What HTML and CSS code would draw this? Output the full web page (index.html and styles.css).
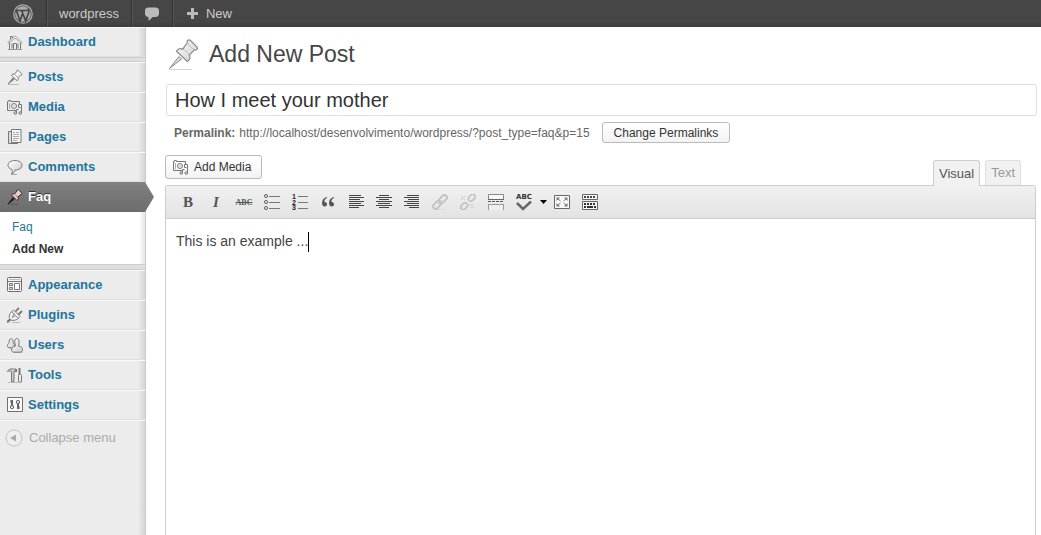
FILE: index.html
```html
<!DOCTYPE html>
<html lang="en">
<head>
<meta charset="utf-8">
<meta name="viewport" content="width=device-width, initial-scale=1">
<title>Add New Post</title>
<link rel="stylesheet" href="styles.css">
</head>
<body>
<svg class="sprite" aria-hidden="true">
  <defs>
    <linearGradient id="metal" x1="0" y1="0" x2="1" y2="1"><stop offset="0" stop-color="#fff"/><stop offset="1" stop-color="#ccc"/></linearGradient>
    <symbol id="i-home" viewBox="0 0 16 16"><path d="M3 8h10v7H3z" fill="#eee"/><path d="M.8 8.500 8 1.800l7.200 6.700L14 9.300 8 4 2 9.300z" fill="#fff" stroke="#888" stroke-width=".8"/><path d="M3.500 5.500V2.500h2V4M2.500 9v6M13.500 9v6M5 9.500v5M11 9.500v5M6.500 15V9.500h3V15" fill="none" stroke="#777"/><path d="M1 15.500h14" stroke="#999"/></symbol>
    <symbol id="i-pin" viewBox="0 0 32 32"><path d="M2 30.500h23" stroke="#aaa" stroke-opacity=".5"/><path d="M2.500 29.500 12 17.500l2.500 2.500z" fill="#ddd" stroke="#888"/><path d="M20.500 3.500c-1-2 .8-3.500 2.700-2.200l6.600 6.600c1.500 2-.3 3.800-2.300 2.800l-5.200 5.300c1.400 2.600 0 5.300-2 6.500L9.500 12.200c1.500-2.200 4-3 6.200-2z" fill="url(#metal)" stroke="#888" stroke-width="1.200"/><path d="M15.700 10.200c2 .5 5.500 3.300 6.600 5.800M20.500 3.500c1.500 3 4 6 7 7.200" fill="none" stroke="#bbb"/></symbol>
    <symbol id="i-smallpin" viewBox="0 0 16 16"><path d="M1 15.500h11" stroke="#bbb"/><path d="m1 15 5-6 1.200 1.200z" fill="#777" stroke="#777" stroke-width=".8"/><path d="M9.800 2.500c-.4-1.200.6-1.700 1.400-1.100l3.400 3.400c.7.900-.1 1.800-1.200 1.400l-2.400 2.500c.7 1.400 0 2.400-.9 3L4.400 6.200c.7-1.100 1.800-1.500 3-1z" fill="#f7f7f7" stroke="#777"/><path d="m7.600 5.300 3.100 3.200" stroke="#999"/></symbol>
    <symbol id="i-pinred" viewBox="0 0 32 32"><path d="M1 30.500h22" stroke="#333" stroke-width="2" stroke-opacity=".4"/><path d="M2 30 12 17l3 3z" fill="#222" stroke="#222" stroke-width="2"/><path d="M20 4c-1-2 1-4 3-2.500l6.500 6.500c1.500 2-.5 4-2.500 3l-5 5c1.500 3 0 6-2 7L9 12c1.500-2.500 4-3 6-2z" fill="#ecd0cb" stroke="#3c2623" stroke-width="2"/><path d="m16 11 6 6" stroke="#8e6962" stroke-width="2"/></symbol>
    <symbol id="i-media" viewBox="0 0 16 16"><path d="M10 11.500H.5v-9h1v-1h2v1h9V5" fill="none" stroke="#777"/><path d="M2.500 4v6" stroke="#aaa"/><circle cx="7" cy="7" r="2.500" fill="#f4f4f4" stroke="#777"/><circle cx="7" cy="7" r="1" fill="#ccc"/><path d="M9.500 14V10.500h2M11.500 5.500h3V14M11.500 5.500v3h2" fill="none" stroke="#777"/><circle cx="8.300" cy="14" r="1.300" fill="#ddd" stroke="#777"/><circle cx="13.300" cy="14" r="1.300" fill="#ddd" stroke="#777"/></symbol>
    <symbol id="i-pages" viewBox="0 0 16 16"><path d="M4 2.500H1.500v12h9V14" fill="#ddd" stroke="#777"/><path d="M4.500.500h9.500v13H4.500z" fill="#f7f7f7" stroke="#777"/><path d="M6 3.500h2M9 3.500h3M6 5.500h6M6 7.500h6M6 9.500h6M6 11.500h4" stroke="#aaa"/></symbol>
    <symbol id="i-comments" viewBox="0 0 16 16"><path d="M4 15.500h6" stroke="#aaa"/><path d="M8 1.500c4 0 7 2 7 4.700s-3 4.800-7 4.800c0 2-1.500 3.300-3.500 3.800.9-1.200 1-2.500.5-4.200C2.500 9.700 1 8.200 1 6.200c0-2.700 3-4.700 7-4.700z" fill="url(#metal)" stroke="#777"/></symbol>
    <symbol id="i-appearance" viewBox="0 0 16 16"><rect x=".5" y=".5" width="14" height="14" rx="1" fill="#f5f5f5" stroke="#6d6d6d"/><path d="M2 2.500h11" stroke="#bbb"/><path d="M1 4.500h13" stroke="#777"/><path d="M2.500 6.500h3v2h-3zM2.500 10.500h3v2h-3z" fill="#ddd" stroke="#777"/><path d="M7.500 6.500h5v6h-5z" fill="#fff" stroke="#777"/></symbol>
    <symbol id="i-plugins" viewBox="0 0 16 16"><path d="M5 15.500h8" stroke="#bbb"/><path d="m0 15.300 3.500-3" fill="none" stroke="#777" stroke-width="2.200"/><path d="M8.500 4.500 12 .8M11.500 7.500 15 4" fill="none" stroke="#777" stroke-width="1.800"/><path d="m6.500 3 6.500 6.500c-2 3-6.500 5.200-9.500 3S3 5.500 6.500 3z" fill="#f5f5f5" stroke="#777"/><path d="m5 5 6 6M7.500 6.500 5 10.500l4-2" fill="none" stroke="#888"/></symbol>
    <symbol id="i-users" viewBox="0 0 16 16"><path d="M4 14.500h11.500V16H6z" fill="#bbb"/><g fill="url(#metal)" stroke="#777"><path d="M2.300 5.800c-1.200-5.500 4.600-5.500 3.700 0C8 7 8 10.500 6 10.800H2C-.2 10.500 0 7 2.300 5.800z"/><path d="M8 7c-1.800-7.500 5.300-7.500 4 0 0 .8-.2 1.500-.5 2 5.500.7 5.500 6 1 6.200H7.800C3 15 3.500 10 8.500 9z"/></g></symbol>
    <symbol id="i-tools" viewBox="0 0 16 16"><path d="M.5 4.500c1-2.500 3-3 6-2.500h2.300v2.500H7v10H4.500v-10c-1.500-.7-2.800-.5-4 0z" fill="#ccc" stroke="#777"/><path d="M9 2v3M12.500 1v7" fill="none" stroke="#777" stroke-width="2"/><rect x="11.500" y="7.500" width="3" height="7.500" rx="1" fill="#eee" stroke="#777"/><path d="M1 15.500h14" stroke="#bbb"/></symbol>
    <symbol id="i-settings" viewBox="0 0 16 16"><path d="M.5.500h15v14H.5z" fill="#fafafa" stroke="#707070"/><path d="M5 3v5M11 7v5" stroke="#666" stroke-width="2"/><path d="M3.500 3v3M12.500 9v3" stroke="#aaa"/><circle cx="5" cy="10" r="1.700" fill="#ddd" stroke="#666"/><circle cx="11" cy="5" r="1.700" fill="#ddd" stroke="#666"/></symbol>
    <symbol id="i-ul" viewBox="0 0 16 16"><g fill="#fff" stroke="#555"><circle cx="2" cy="2" r="1.500"/><circle cx="2" cy="8" r="1.500"/><circle cx="2" cy="14" r="1.500"/></g><path d="M5 2.500h11M5 8.500h11M5 14.500h11" stroke="#777"/></symbol>
    <symbol id="i-ol" viewBox="0 0 16 16"><text class="digit" x="0" y="5">1</text><text class="digit" x="0" y="11">2</text><text class="digit" x="0" y="16">3</text><path d="M6 2.500h10M6 8.500h10M6 14.500h10" stroke="#777"/></symbol>
    <symbol id="i-left" viewBox="0 0 16 16"><path d="M1 1.500h12M1 3.500h15M1 5.500h11M1 7.500h15M1 9.500h12M1 11.500h15M1 13.500h10" stroke="#444"/></symbol>
    <symbol id="i-center" viewBox="0 0 16 16"><path d="M3 1.500h10M0 3.500h16M3 5.500h10M0 7.500h16M2 9.500h12M0 11.500h16M3 13.500h10" stroke="#444"/></symbol>
    <symbol id="i-right" viewBox="0 0 16 16"><path d="M3 1.500h12M0 3.500h15M4 5.500h11M0 7.500h15M3 9.500h12M0 11.500h15M5 13.500h10" stroke="#444"/></symbol>
    <symbol id="i-link" viewBox="0 0 16 16"><path d="M4 15.500h10" stroke="#ddd"/><g fill="none" stroke="#c4c4c4" stroke-width="2"><rect x="6.500" y="2.500" width="9" height="5" rx="2.500" transform="rotate(-45 11 5)"/><rect x=".5" y="8.500" width="9" height="5" rx="2.500" transform="rotate(-45 5 11)"/></g><path d="m6 10 4-4" stroke="#bbb"/></symbol>
    <symbol id="i-unlink" viewBox="0 0 16 16"><g fill="none" stroke="#c4c4c4" stroke-width="1.800"><rect x="8" y="1.200" width="7.500" height="5" rx="2.400" transform="rotate(-45 11.750 3.700)"/><rect x=".5" y="9.700" width="7.500" height="5" rx="2.400" transform="rotate(-45 4.250 12.200)"/></g><path d="m1 2 4 4M1 6l1.500-1.500M4 3l1-1M10 10l4 4M10 14l1.500-1.500M13 11l1-1" stroke="#c8c8c8"/></symbol>
    <symbol id="i-more" viewBox="0 0 16 16"><path d="M.5.500V5.500h15V.5z" fill="#f9f9f9" stroke="#888"/><path d="M0 5.500h16M0 10.500h16" stroke="#666"/><path d="M0 7.500h16" stroke="#555" stroke-dasharray="3 1"/><path d="M.5 16v-5.500h15V16" fill="#eee" stroke="#999"/></symbol>
    <symbol id="i-full" viewBox="0 0 16 16"><path d="M.5 1.500h15v13H.5z" fill="#f8f8f8" stroke="#666"/><path d="M2.500 7V3.500H6zM10 3.500h3.500V7zM2.500 9v3.500H6zM13.500 9v3.500H10z" fill="#777"/><path d="m4 5 2.500 2M12 5 9.500 7M4 11l2.500-2M12 11 9.500 9" stroke="#777"/></symbol>
    <symbol id="i-sink" viewBox="0 0 16 16"><path d="M.5.500h15v5H.5zM.5 7.500h15v8H.5z" fill="#fafafa" stroke="#666"/><path d="M2 3h12" stroke="#444" stroke-width="2" stroke-dasharray="2 1"/><path d="M2 10h12" stroke="#333" stroke-width="2" stroke-dasharray="2 1"/><path d="M2 13h2M5 13h6M12 13h2" stroke="#333" stroke-width="2"/></symbol>
  </defs>
</svg>

<header class="adminbar">
  <a class="bar-item bar-logo" href="#" aria-label="About WordPress"><svg width="20" height="20" viewBox="0 0 20 20"><circle cx="10" cy="10" r="9.200" fill="none" stroke="#aaa" stroke-width="1.300"/><circle cx="10" cy="10" r="7.800" fill="#aaa"/><path d="M1.800 6.500h4.500M5.500 6.500h5.500M10 6.500h4.500M3.300 6.500 7 17l3-9M8.700 6.500l4 10.500 3-8.500c.7-2-.7-2.500-.7-4" fill="none" stroke="#464646" stroke-width="1.700"/></svg></a>
  <a class="bar-item" href="#">wordpress</a>
  <a class="bar-item bar-comment" href="#" aria-label="Comments"><svg width="16" height="16" viewBox="0 0 16 16"><path d="M4.500 1.500h7C14 1.500 15 3 15 4.500v3c0 2-1.300 3.500-3.500 3.500H8.800L4.500 15v-4C2.200 10.800 1 9.500 1 7.500v-3c0-1.500 1-3 3.500-3z" fill="#bbb"/></svg></a>
  <a class="bar-item bar-new" href="#"><svg width="11" height="11" viewBox="0 0 11 11"><path d="M4 0h3v4h4v3H7v4H4V7H0V4h4z" fill="#bbb"/></svg>New</a>
</header>

<div class="layout">
  <nav class="sidebar" aria-label="Admin menu">
    <a class="item" href="#"><svg class="icon"><use href="#i-home"/></svg>Dashboard</a>
    <div class="separator"></div>
    <a class="item" href="#"><svg class="icon"><use href="#i-smallpin"/></svg>Posts</a>
    <a class="item" href="#"><svg class="icon"><use href="#i-media"/></svg>Media</a>
    <a class="item" href="#"><svg class="icon"><use href="#i-pages"/></svg>Pages</a>
    <a class="item" href="#"><svg class="icon"><use href="#i-comments"/></svg>Comments</a>
    <a class="item current" href="#"><svg class="icon"><use href="#i-pinred"/></svg>Faq</a>
    <div class="submenu">
      <a href="#">Faq</a>
      <a class="selected" href="#">Add New</a>
    </div>
    <div class="separator"></div>
    <a class="item" href="#"><svg class="icon"><use href="#i-appearance"/></svg>Appearance</a>
    <a class="item" href="#"><svg class="icon"><use href="#i-plugins"/></svg>Plugins</a>
    <a class="item" href="#"><svg class="icon"><use href="#i-users"/></svg>Users</a>
    <a class="item" href="#"><svg class="icon"><use href="#i-tools"/></svg>Tools</a>
    <a class="item" href="#"><svg class="icon"><use href="#i-settings"/></svg>Settings</a>
    <button class="collapse" type="button"><svg width="18" height="18" viewBox="0 0 18 18"><circle cx="9" cy="9" r="8" fill="#eee" stroke="#c4c4c4"/><path d="m5 9 6-3.500v7z" fill="#aaa"/></svg>Collapse menu</button>
  </nav>

  <main class="content">
    <div class="heading"><svg width="32" height="32"><use href="#i-pin"/></svg><h1>Add New Post</h1></div>
    <input class="title" type="text" aria-label="Title" value="How I meet your mother">
    <div class="permalink"><strong>Permalink:</strong><span>http://localhost/desenvolvimento/wordpress/?post_type=faq&amp;p=15</span><button class="button change" type="button">Change Permalinks</button></div>
    <div class="tools">
      <button class="button add-media" type="button"><svg class="icon"><use href="#i-media"/></svg>Add Media</button>
      <div class="tabs"><button class="tab active" type="button">Visual</button><button class="tab" type="button">Text</button></div>
    </div>
    <section class="editor">
      <div class="toolbar">
        <button class="tool bold" type="button">B</button>
        <button class="tool italic" type="button">I</button>
        <button class="tool strike" type="button">ABC</button>
        <button class="tool" type="button" aria-label="Bulleted list"><svg class="icon"><use href="#i-ul"/></svg></button>
        <button class="tool" type="button" aria-label="Numbered list"><svg class="icon"><use href="#i-ol"/></svg></button>
        <button class="tool" type="button" aria-label="Quote"><svg class="icon" viewBox="0 0 16 16"><path d="M7 3C4 3.500 2 6 2 9c0 2 1 3.500 2.700 3.500C6 12.500 7 11.500 7 10.200S6 8 4.500 8C4.300 6 5.300 4.500 7 4zM14 3c-3 .5-5 3-5 6 0 2 1 3.500 2.700 3.500 1.300 0 2.300-1 2.300-2.300S13 8 11.500 8c-.2-2 .8-3.500 2.500-4z" fill="#555"/></svg></button>
        <button class="tool" type="button" aria-label="Align left"><svg class="icon"><use href="#i-left"/></svg></button>
        <button class="tool" type="button" aria-label="Align center"><svg class="icon"><use href="#i-center"/></svg></button>
        <button class="tool" type="button" aria-label="Align right"><svg class="icon"><use href="#i-right"/></svg></button>
        <button class="tool" type="button" aria-label="Insert link" disabled><svg class="icon"><use href="#i-link"/></svg></button>
        <button class="tool" type="button" aria-label="Remove link" disabled><svg class="icon"><use href="#i-unlink"/></svg></button>
        <button class="tool" type="button" aria-label="Insert more tag"><svg class="icon"><use href="#i-more"/></svg></button>
        <button class="tool spell" type="button"><span>ABC</span><svg width="16" height="10" viewBox="0 0 16 10"><path d="m1 2 6 6 8-7.500" fill="none" stroke="#666" stroke-width="2.500"/></svg></button>
        <button class="tool arrow" type="button" aria-label="Spelling language"><svg width="7" height="4" viewBox="0 0 7 4"><path d="M0 0h7L3.500 4z" fill="#000"/></svg></button>
        <button class="tool" type="button" aria-label="Fullscreen"><svg class="icon"><use href="#i-full"/></svg></button>
        <button class="tool" type="button" aria-label="Kitchen sink"><svg class="icon"><use href="#i-sink"/></svg></button>
      </div>
      <div class="document" contenteditable="true" role="textbox" aria-label="Post content">This is an example ...<span class="caret"></span></div>
    </section>
  </main>
</div>
</body>
</html>
```

FILE: styles.css
```css
* { box-sizing: border-box; }
body {
  margin: 0;
  min-height: 100vh;
  display: flex;
  flex-direction: column;
  background: #fff;
  color: #333;
  font: 12px/18px "Liberation Sans", Arial, sans-serif;
}
a { text-decoration: none; }
button, input { font: inherit; color: inherit; }
button { cursor: pointer; }
.sprite { position: absolute; width: 0; height: 0; }
.icon { width: 16px; height: 16px; flex: none; }

.adminbar {
  display: flex;
  height: 27px;
  background: linear-gradient(#464646 80%, #3d3d3d);
}
.bar-item {
  display: flex;
  align-items: center;
  padding: 0 12px;
  color: #ccc;
  font-size: 13px;
  border-right: 1px solid #333;
  box-shadow: 1px 0 #555;
}
.bar-logo { padding: 0 13px; }
.bar-comment { padding: 0 12px; }
.bar-new { gap: 8px; padding: 0 14px; border: 0; box-shadow: none; }

.layout { flex: 1; display: flex; }
.sidebar {
  flex: none;
  width: 146px;
  background: linear-gradient(to left, rgba(0,0,0,.1), rgba(0,0,0,0) 7px) #ececec;
  border-right: 1px solid #ccc;
}
.item {
  display: flex;
  align-items: center;
  gap: 5px;
  height: 30px;
  padding-left: 7px;
  border-top: 1px solid #f9f9f9;
  border-bottom: 1px solid #dfdfdf;
  color: #21759b;
  font-size: 13px;
  font-weight: bold;
}
.separator {
  height: 5px;
  background: #dfdfdf;
  border-top: 1px solid #ccc;
  border-bottom: 1px solid #ccc;
}
.submenu + .separator { height: 6px; }
.current {
  position: relative;
  background: linear-gradient(#808080, #6d6d6d);
  border-color: #808080 #6d6d6d #6d6d6d;
  color: #fff;
  text-shadow: 0 -1px #333;
}
.current::after {
  content: "";
  position: absolute;
  left: 100%;
  top: -1px;
  width: 9px;
  height: 30px;
  background: linear-gradient(#808080, #6d6d6d);
  clip-path: polygon(0 0, 100% 50%, 0 100%);
}
.submenu {
  display: flex;
  flex-direction: column;
  padding: 4px 0;
  background: linear-gradient(to left, rgba(0,0,0,.1), rgba(0,0,0,0) 6px) #fff;
}
.submenu a { padding: 2px 12px; color: #21759b; }
.submenu .selected { color: #333; font-weight: bold; }
.collapse {
  display: flex;
  align-items: center;
  gap: 6px;
  width: 100%;
  height: 34px;
  padding: 0 5px;
  background: none;
  border: 0;
  border-top: 1px solid #f9f9f9;
  color: #aaa;
  font-size: 13px;
}

.content {
  flex: 1;
  min-width: 0;
  display: flex;
  flex-direction: column;
  padding: 12px 4px 0 19px;
}
.heading { display: flex; gap: 10px; height: 45px; padding-left: 2px; color: #464646; }
.heading svg { flex: none; }
h1 { margin: 0; font-size: 23px; font-weight: normal; line-height: 30px; }
.title {
  height: 32px;
  margin-left: 1px;
  padding: 0 8px;
  border: 1px solid #dfdfdf;
  border-radius: 3px;
  font-size: 20px;
  line-height: 26px;
  background: #fff;
}
.permalink { display: flex; align-items: center; gap: 4px; padding: 6px 9px 0; color: #666; }
.button {
  height: 21px;
  padding: 0 8px;
  border: 1px solid #bbb;
  border-radius: 3px;
  background: linear-gradient(#fff, #f3f3f3);
  color: #333;
  font-size: 12px;
  line-height: 18px;
}
.change { margin-left: 8px; padding: 0 11px; }
.tools { display: flex; justify-content: space-between; align-items: flex-start; padding: 12px 16px 0 0; }
.add-media { display: flex; align-items: center; gap: 5px; height: 24px; padding: 0 10px 0 7px; }
.tabs { display: flex; gap: 5px; padding-top: 5px; }
.tab {
  position: relative;
  height: 25px;
  padding: 0 5px;
  border: 1px solid #dfdfdf;
  border-bottom: 0;
  border-radius: 3px 3px 0 0;
  background: #f1f1f1;
  color: #999;
  font-size: 13px;
}
.active { height: 26px; margin-bottom: -1px; border-color: #ccc; color: #555; }
.editor {
  flex: 1;
  display: flex;
  flex-direction: column;
  margin-right: 1px;
  border: 1px solid #ccc;
  border-bottom: 0;
  border-radius: 3px 3px 0 0;
}
.toolbar {
  display: flex;
  height: 33px;
  padding: 0 8px;
  border-bottom: 1px solid #ccc;
  background: linear-gradient(#f1f1f1, #e3e3e3);
}
.tool {
  display: flex;
  align-items: center;
  justify-content: center;
  width: 28px;
  padding: 0;
  border: 0;
  background: none;
  color: #555;
}
.bold, .italic { font: bold 15px "Liberation Serif", serif; }
.italic { font-style: italic; }
.strike { font: bold 8px "Liberation Serif", serif; text-decoration: line-through; }
.digit { font: bold 7px "Liberation Sans", sans-serif; fill: #222; }
.spell { flex-direction: column; color: #333; font: bold 7px/7px "DejaVu Sans", sans-serif; }
.arrow { width: 10px; }
.document { flex: 1; padding: 10px; font-size: 14px; line-height: 24px; color: #444; outline: 0; }
.caret { display: inline-block; height: 20px; border-left: 1px solid #000; vertical-align: middle; }
```
